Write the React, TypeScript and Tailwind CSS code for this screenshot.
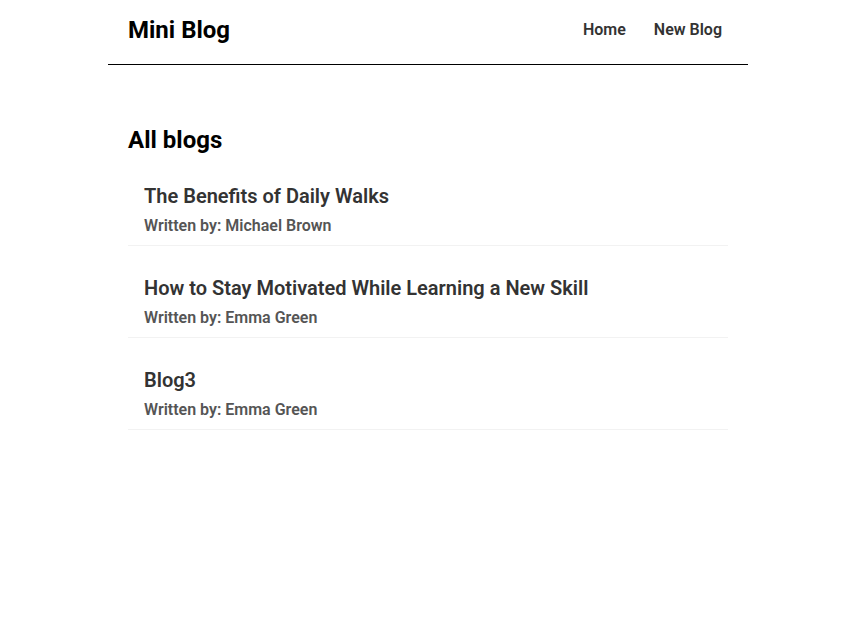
import React from "react";

interface Blog {
  id: number;
  title: string;
  author: string;
}

const blogs: Blog[] = [
  { id: 1, title: "The Benefits of Daily Walks", author: "Michael Brown" },
  { id: 2, title: "How to Stay Motivated While Learning a New Skill", author: "Emma Green" },
  { id: 3, title: "Blog3", author: "Emma Green" },
];

const Navbar: React.FC = () => {
  return (
    <nav className="flex items-center justify-between h-[64px] pl-5 pr-[26px] border-b border-black box-content">
      <a href="/" className="text-2xl font-bold text-black -mt-[4px]">
        Mini Blog
      </a>
      <div className="flex gap-7 -mt-[4px]">
        <a href="/" className="text-base font-semibold text-[#333]">
          Home
        </a>
        <a href="/create" className="text-base font-semibold text-[#333]">
          New Blog
        </a>
      </div>
    </nav>
  );
};

const BlogList: React.FC<{ blogs: Blog[]; title: string }> = ({ blogs, title }) => {
  return (
    <div>
      <h2 className="text-2xl font-bold text-black">{title}</h2>
      <div className="flex flex-col gap-5 mt-[18px]">
        {blogs.map((blog) => (
          <div key={blog.id} className="px-4 pt-2 pb-[7px] border-b border-[#f2f2f2]">
            <h3 className="text-xl leading-7 font-semibold text-[#333]">{blog.title}</h3>
            <p className="mt-[4px] text-base font-semibold text-[#555]">
              Written by: {blog.author}
            </p>
          </div>
        ))}
      </div>
    </div>
  );
};

export default function App() {
  return (
    <div className="min-h-screen bg-white font-['Roboto',sans-serif]">
      <div className="w-[640px] ml-[108px]">
        <Navbar />
        <div className="px-5 pt-[59px]">
          <BlogList blogs={blogs} title="All blogs" />
        </div>
      </div>
    </div>
  );
}
